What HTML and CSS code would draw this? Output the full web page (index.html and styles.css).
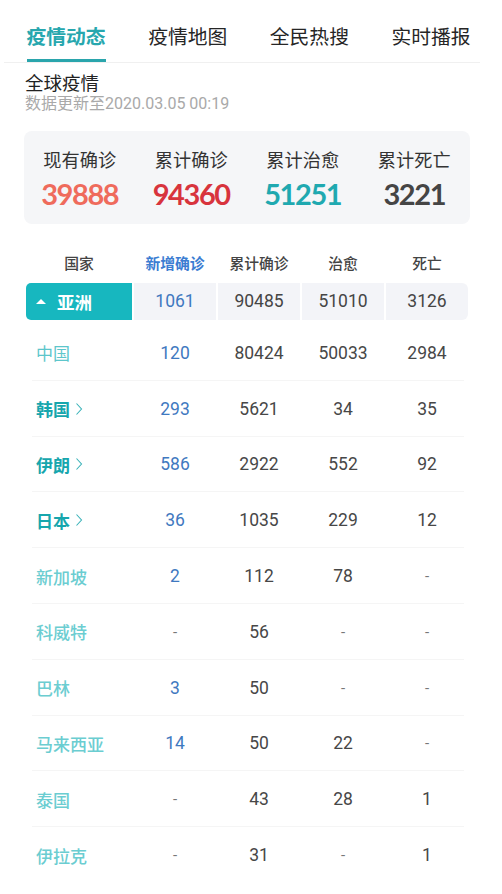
FILE: index.html
```html
<!DOCTYPE html>
<html lang="zh-CN">
<head>
<meta charset="utf-8">
<title>疫情动态</title>
<link rel="stylesheet" href="styles.css">
</head>
<body>
<nav class="tabs">
  <div class="tab active">疫情动态</div>
  <div class="tab">疫情地图</div>
  <div class="tab">全民热搜</div>
  <div class="tab">实时播报</div>
</nav>
<h1 class="title">全球疫情</h1>
<div class="updated">数据更新至2020.03.05 00:19</div>

<section class="summary">
  <div class="sum-item"><div class="sum-label">现有确诊</div><div class="sum-num c-now">39888</div></div>
  <div class="sum-item"><div class="sum-label">累计确诊</div><div class="sum-num c-total">94360</div></div>
  <div class="sum-item"><div class="sum-label">累计治愈</div><div class="sum-num c-cure">51251</div></div>
  <div class="sum-item"><div class="sum-label">累计死亡</div><div class="sum-num c-dead">3221</div></div>
</section>

<section class="table">
  <div class="thead">
    <div>国家</div>
    <div class="th-new">新增确诊</div>
    <div>累计确诊</div>
    <div>治愈</div>
    <div>死亡</div>
  </div>
  <div class="region">
    <div class="region-name"><span class="tri"></span>亚洲</div>
    <div class="rcell new">1061</div>
    <div class="rcell">90485</div>
    <div class="rcell">51010</div>
    <div class="rcell last">3126</div>
  </div>

  <div class="row"><div class="name plain">中国</div><div class="new">120</div><div>80424</div><div>50033</div><div>2984</div></div>
  <div class="row"><div class="name link">韩国<svg class="chev" viewBox="0 0 8 14" width="8" height="14"><polyline points="1.5,1.5 6.5,7 1.5,12.5" fill="none" stroke="#3bb3b9" stroke-width="1.1"/></svg></div><div class="new">293</div><div>5621</div><div>34</div><div>35</div></div>
  <div class="row"><div class="name link">伊朗<svg class="chev" viewBox="0 0 8 14" width="8" height="14"><polyline points="1.5,1.5 6.5,7 1.5,12.5" fill="none" stroke="#3bb3b9" stroke-width="1.1"/></svg></div><div class="new">586</div><div>2922</div><div>552</div><div>92</div></div>
  <div class="row"><div class="name link">日本<svg class="chev" viewBox="0 0 8 14" width="8" height="14"><polyline points="1.5,1.5 6.5,7 1.5,12.5" fill="none" stroke="#3bb3b9" stroke-width="1.1"/></svg></div><div class="new">36</div><div>1035</div><div>229</div><div>12</div></div>
  <div class="row"><div class="name">新加坡</div><div class="new">2</div><div>112</div><div>78</div><div class="dash">-</div></div>
  <div class="row"><div class="name">科威特</div><div class="dash">-</div><div>56</div><div class="dash">-</div><div class="dash">-</div></div>
  <div class="row"><div class="name">巴林</div><div class="new">3</div><div>50</div><div class="dash">-</div><div class="dash">-</div></div>
  <div class="row"><div class="name">马来西亚</div><div class="new">14</div><div>50</div><div>22</div><div class="dash">-</div></div>
  <div class="row"><div class="name">泰国</div><div class="dash">-</div><div>43</div><div>28</div><div>1</div></div>
  <div class="row"><div class="name">伊拉克</div><div class="dash">-</div><div>31</div><div class="dash">-</div><div>1</div></div>
</section>
</body>
</html>
```

FILE: styles.css
```css
* { box-sizing: border-box; }
html, body { margin: 0; padding: 0; background: #fff; }
body {
  width: 502px;
  height: 894px;
  overflow: hidden;
  font-family: "Noto Sans CJK SC", "Noto Sans", sans-serif;
  color: #333;
}

.tabs {
  display: flex;
  gap: 42.5px;
  margin-left: 4px;
  width: 476px;
  padding-left: 22.5px;
  border-bottom: 1px solid #f0f0f0;
}
.tab {
  height: 62px;
  padding-top: 24px;
  font-size: 19.8px;
  line-height: 24px;
  color: #262626;
  white-space: nowrap;
  border-bottom: 3px solid transparent;
}
.tab.active {
  color: #27a7ae;
  font-weight: 700;
  border-bottom-color: #2aa5ac;
}

.title {
  margin: 7px 0 0 25px;
  font-size: 18.5px;
  line-height: 24px;
  font-weight: 400;
  color: #222;
}
.updated {
  margin-left: 25px;
  font-size: 16px;
  line-height: 20px;
  color: #a9a9a9;
  font-family: Roboto, "Noto Sans CJK SC", sans-serif;
}

.summary {
  margin: 17px 0 0 24px;
  width: 446px;
  height: 93px;
  padding-top: 16px;
  background: #f5f6f8;
  border-radius: 8px;
  display: grid;
  grid-template-columns: repeat(4, 1fr);
}
.sum-item { text-align: center; }
.sum-label {
  font-size: 18.2px;
  line-height: 24px;
  color: #333;
}
.sum-num {
  margin-top: 6px;
  font-family: Lato, "Noto Sans", sans-serif;
  font-weight: 700;
  font-size: 29px;
  line-height: 34px;
  letter-spacing: -1.4px;
}
.c-now { color: #ef6b5c; }
.c-total { color: #d8343d; }
.c-cure { color: #1fa9b0; }
.c-dead { color: #454545; }

.table {
  margin: 29px 0 0 26px;
  width: 442px;
}
.thead, .region, .row {
  display: grid;
  grid-template-columns: 106px repeat(4, 1fr);
  column-gap: 2px;
  align-items: center;
  text-align: center;
}
.thead {
  font-size: 14.8px;
  line-height: 20px;
  font-weight: 500;
  color: #444;
}
.thead .th-new { color: #3b7dd2; font-weight: 700; }

.region {
  margin-top: 10px;
  height: 37px;
  font-family: Roboto, sans-serif;
  font-size: 17.5px;
  color: #454545;
}
.region > div { height: 37px; line-height: 37px; }
.region-name {
  background: #17b7bf;
  border-radius: 5px 0 0 5px;
  color: #fff;
  font-family: "Noto Sans CJK SC", sans-serif;
  font-weight: 700;
  font-size: 17.5px;
  text-align: left;
  padding-left: 10px;
  display: flex;
  align-items: center;
}
.tri {
  width: 0;
  height: 0;
  border-left: 5px solid transparent;
  border-right: 5px solid transparent;
  border-bottom: 5px solid #fff;
  margin-right: 11px;
  margin-top: -1px;
}
.rcell { background: #f3f4f8; }
.rcell.last { border-radius: 0 6px 6px 0; }
.region .new, .row .new { color: #3f79c0; }

.row {
  height: 55.8px;
  font-family: Roboto, sans-serif;
  font-size: 17.5px;
  color: #474747;
  background: linear-gradient(#f5f5f5, #f5f5f5) no-repeat 6px 100% / calc(100% - 10px) 1px;
}
.region + .row { margin-top: 5px; }
.row:last-child { background: none; }
.name {
  text-align: left;
  padding-left: 10px;
  font-family: "Noto Sans CJK SC", sans-serif;
  font-size: 17px;
  font-weight: 500;
  color: #6bcdd1;
  display: flex;
  align-items: center;
  white-space: nowrap;
}
.name.plain { color: #5dc6cb; font-weight: 400; }
.name.link { color: #17a6ad; font-weight: 700; }
.chev { margin-left: 5px; }
.dash { color: #777; font-size: 15px; }
```
